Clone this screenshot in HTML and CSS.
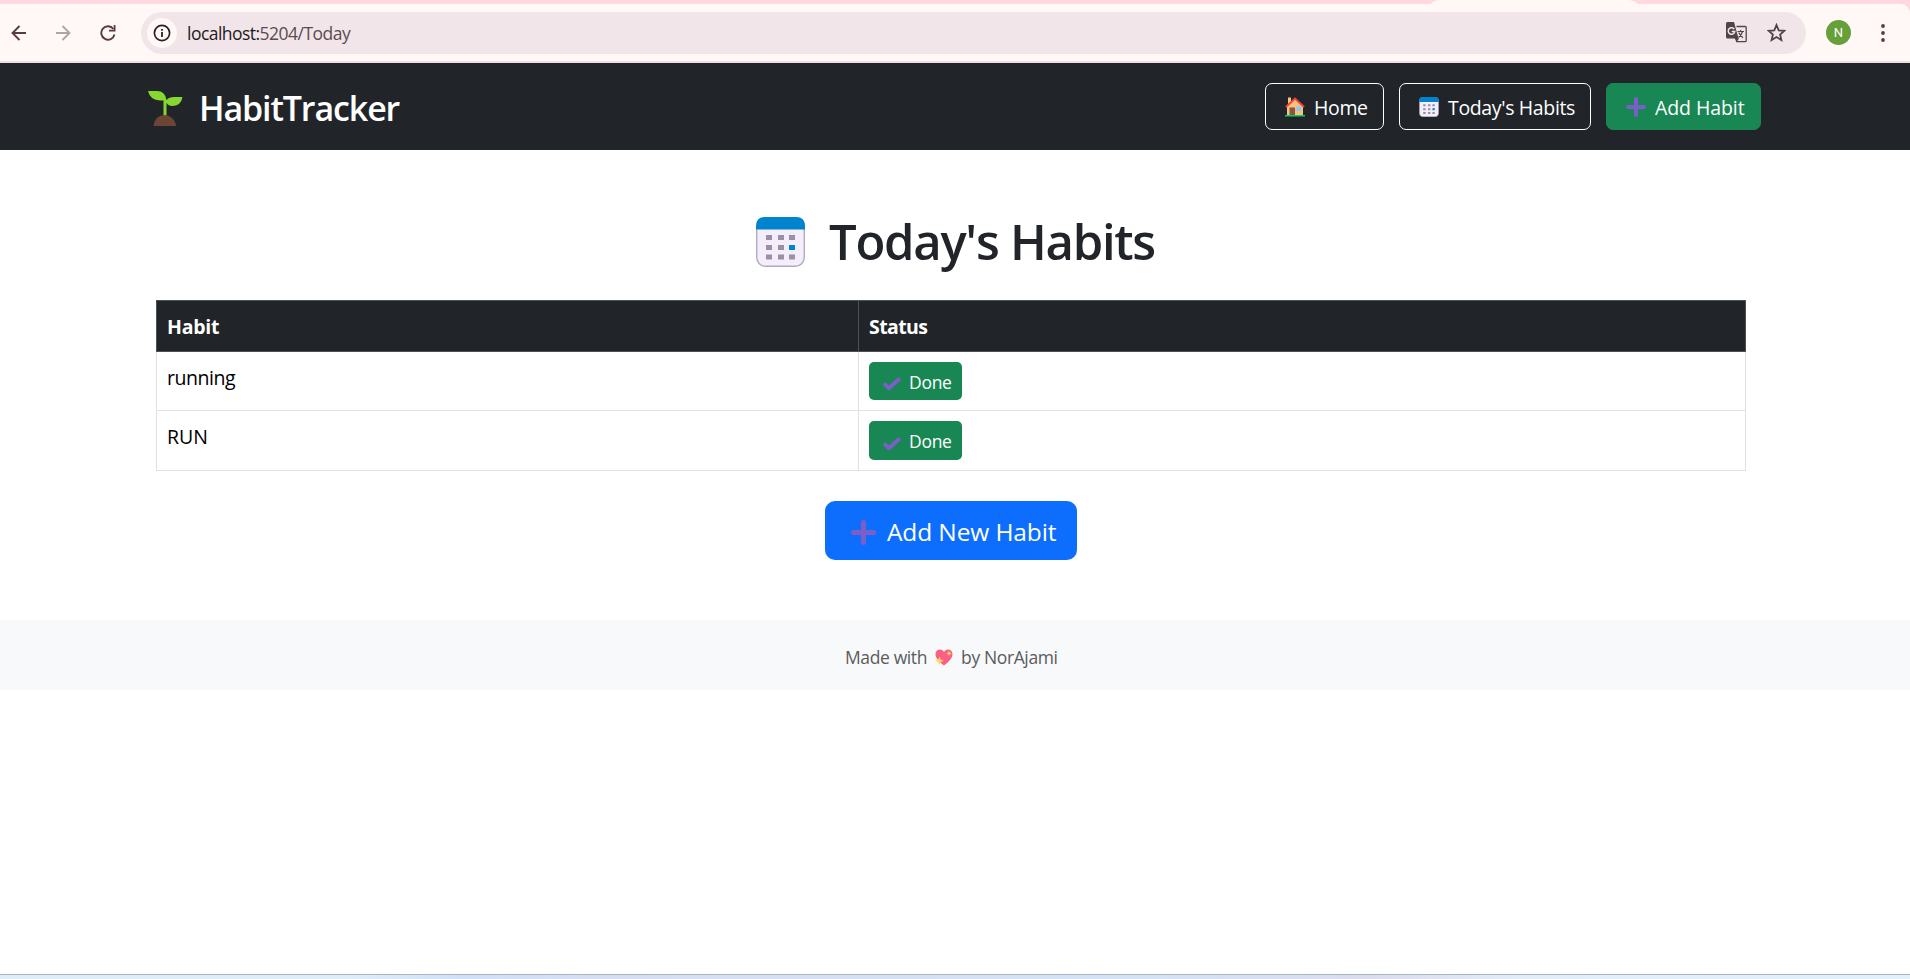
FILE: index.html
```html
<!DOCTYPE html>
<html lang="en">
<head>
<meta charset="utf-8">
<title>Today's Habits</title>
<link rel="stylesheet" href="styles.css">
</head>
<body>
<svg class="defs" width="0" height="0" aria-hidden="true">
  <symbol id="calendar" viewBox="0 0 49 50">
    <rect x=".7" y=".7" width="47.6" height="48.6" rx="9" fill="#f4edfa" stroke="#b4a9c2" stroke-width="1.4"/>
    <path d="M0 12.500V9Q0 0 9 0H40Q49 0 49 9V12.500Z" fill="#0084ce"/>
    <path d="M10 18h6v5h-6zM22 18h6v5h-6zM33 18h6v5h-6zM10 28h6v5h-6zM22 28h6v5h-6zM10 37.500h6v5h-6zM22 37.500h6v5h-6zM33 37.500h6v5h-6z" fill="#9b8fa8"/>
    <path d="M33 28h6v5h-6z" fill="#0084ce"/>
  </symbol>
  <symbol id="plus" viewBox="0 0 20 20">
    <path d="M10 2v16M2 10h16" stroke="#7c5ec8" stroke-width="4" stroke-linecap="round"/>
  </symbol>
  <symbol id="check" viewBox="0 0 18 14">
    <path d="M2.300 7.600L6 11.200L15.600 2.600" fill="none" stroke="#7c5ec8" stroke-width="4" stroke-linecap="round" stroke-linejoin="round"/>
  </symbol>
</svg>

<header class="browser">
  <div class="tabstrip"><div class="active-tab"></div></div>
  <div class="toolbar">
    <svg class="back" width="16" height="16" viewBox="0 0 16 16"><path d="M15 8H2M8.500 1L1.500 8l7 7" fill="none" stroke="#5b3b42" stroke-width="1.900"/></svg>
    <svg class="forward" width="16" height="16" viewBox="0 0 16 16"><path d="M1 8h13M7.500 1l7 7l-7 7" fill="none" stroke="#b5a2a6" stroke-width="1.900"/></svg>
    <svg class="reload" width="16" height="16" viewBox="0 0 16 16"><path d="M13.400 4A6.700 6.700 0 1 0 14.500 9.500" fill="none" stroke="#5b3b42" stroke-width="1.900"/><path d="M15.500 0v6.500H9V4.700h4.700V0z" fill="#5b3b42"/></svg>
    <div class="omnibox">
      <span class="site-info"><svg width="18" height="18" viewBox="0 0 18 18"><circle cx="9" cy="9" r="7.600" fill="none" stroke="#2b2023" stroke-width="1.700"/><path d="M8.100 8h1.800v5H8.100zM8.100 5h1.800v1.800H8.100z" fill="#2b2023"/></svg></span>
      <span class="url"><span class="host">localhost:</span>5204/Today</span>
      <svg class="translate" width="21" height="21" viewBox="0 0 21 21"><path d="M10.500 4.500H19.200Q20.200 4.500 20.200 5.500V18.700Q20.200 19.700 19.200 19.700H10.500" fill="none" stroke="#52434a" stroke-width="1.300"/><path d="M1.500 0H8L12.500 16.500H1.500Q0 16.500 0 15V1.500Q0 0 1.500 0ZM8.800 16.500H13L10.500 20.600Z" fill="#52434a"/><path d="M8.300 7.200A3.300 3.300 0 1 0 8.800 9.500H5.700" fill="none" stroke="#f2e5e9" stroke-width="1.500"/><path d="M11.500 9.500h6.500M14.700 8v1.500M16.500 9.500Q15.500 13 12.500 15.500M12.700 10.500Q14.500 14 17 15.800" fill="none" stroke="#52434a" stroke-width="1.200"/></svg>
      <svg class="star" width="19" height="19" viewBox="0 0 19 19"><path d="M9.500 2l2.200 5.300 5.700.5-4.300 3.700 1.300 5.600-4.900-3-4.900 3 1.300-5.600L1.600 7.800l5.700-.5z" fill="none" stroke="#52434a" stroke-width="1.800"/></svg>
    </div>
    <span class="avatar">N</span>
    <svg class="menu" width="4" height="18" viewBox="0 0 4 18"><g fill="#5b3b42"><circle cx="2" cy="2" r="1.900"/><circle cx="2" cy="9" r="1.900"/><circle cx="2" cy="16" r="1.900"/></g></svg>
  </div>
</header>

<nav class="navbar">
  <a class="brand">
    <svg width="35" height="35" viewBox="0 0 35 35"><path d="M17 25V12" stroke="#86d72f" stroke-width="3" fill="none"/><path d="M0 0H9Q17 0 18.500 9Q21 6 26 6H34.500Q33 15 24 15Q20.500 15 18.500 12V12H15.500V9.500H12Q2 9 0 0Z" fill="#86d72f"/><path d="M5.500 35Q5.500 31 8.500 27.500Q12 24 16.500 24T24.500 27.500Q28 31 28 35Z" fill="#6d4534"/></svg>
    <span class="brand-name">HabitTracker</span>
  </a>
  <div class="links">
    <a class="btn home"><svg width="20" height="20" viewBox="0 0 20 20"><path d="M3 .5h3v7H3z" fill="#f8c27c"/><path d="M2 9L10 2L18 9V18.500H2Z" fill="#f8c27c"/><path d="M.9 9.900L10 1.500L19.100 9.900" fill="none" stroke="#f4413c" stroke-width="2"/><path d="M4.500 10.500h5.500v8H4.500z" fill="#8b5742"/><rect x="11.500" y="9.500" width="4.500" height="4.500" fill="#83cbff"/><path d="M0 18h20v1.500H0z" fill="#00d26a"/></svg><span>Home</span></a>
    <a class="btn today"><svg width="20" height="20"><use href="#calendar"/></svg><span>Today's Habits</span></a>
    <a class="btn add"><svg width="20" height="20"><use href="#plus"/></svg><span>Add Habit</span></a>
  </div>
</nav>

<main>
  <h1><svg width="49" height="50"><use href="#calendar"/></svg><span>Today's Habits</span></h1>
  <table>
    <thead><tr><th class="habit-col"><span class="t-habit">Habit</span></th><th><span class="t-status">Status</span></th></tr></thead>
    <tbody>
      <tr class="row-one"><td class="name"><span class="t-running">running</span></td><td><a class="done"><svg width="18" height="14"><use href="#check"/></svg><span>Done</span></a></td></tr>
      <tr class="row-two"><td class="name"><span class="t-run">RUN</span></td><td><a class="done tall"><svg width="18" height="14"><use href="#check"/></svg><span>Done</span></a></td></tr>
    </tbody>
  </table>
  <a class="add-new"><svg width="25" height="25"><use href="#plus"/></svg><span>Add New Habit</span></a>
</main>

<footer><span class="made">Made with</span><svg width="18" height="17" viewBox="0 0 18 17"><path d="M9 16.500C4 12.500 .5 9 .5 5.200C.5 2.500 2.500 .6 5 .6C6.800 .6 8.200 1.500 9 3C9.800 1.500 11.200 .6 13 .6C15.500 .6 17.500 2.500 17.500 5.200C17.500 9 14 12.500 9 16.500Z" fill="#fb5f83"/><path d="M4.500 7.500l1.300 3L8.800 11.800L5.800 13.100L4.500 16.100L3.200 13.100L.2 11.800L3.200 10.500ZM14 2l.9 1.600 1.600.9-1.600.9L14 7l-.9-1.600-1.600-.9 1.600-.9Z" fill="#fcd667"/></svg><span class="by">by NorAjami</span></footer>
<div class="taskbar"></div>
</body>
</html>
```
FILE: styles.css
```css
* { box-sizing: border-box; }
body {
  margin: 0;
  height: 979px;
  overflow: hidden;
  display: flex;
  flex-direction: column;
  background: #fff;
  color: #212529;
  font-family: "Open Sans", "Noto Sans", sans-serif;
  font-size: 19.5px;
  line-height: 30px;
}
svg { display: block; flex: none; }
.defs { position: absolute; }
span { white-space: nowrap; }

/* Browser chrome */
.browser { height: 63px; background: #ffd8e0; border-bottom: 2px solid #f2dde2; }
.tabstrip { height: 4px; }
.active-tab { width: 206px; height: 4px; margin-left: 1431px; background: #fff8f6; border-radius: 10px 10px 0 0 / 4px 4px 0 0; }
.toolbar { height: 57px; display: flex; align-items: center; background: #fff8f6; border-radius: 0 9px 0 0; }
.back { margin-left: 11px; }
.forward { margin-left: 28px; }
.reload { margin-left: 29px; }
.omnibox { width: 1665px; height: 42px; margin-left: 25px; padding-left: 6px; display: flex; align-items: center; background: #f2e5e9; border-radius: 21px; }
.site-info { width: 30px; height: 30px; border-radius: 50%; display: flex; align-items: center; justify-content: center; background: #fff8f6; }
.url { margin-left: 10px; padding-top: 1px; color: #5b4b50; font-size: 17.5px; letter-spacing: -.53px; }
.host { color: #211a1d; }
.translate { margin-left: auto; margin-right: 20px; }
.star { margin-right: 20px; }
.avatar { width: 25px; height: 25px; margin-left: 20px; border-radius: 50%; background: #679f38; color: #fff; font: 13px/25px Roboto, sans-serif; text-align: center; }
.menu { margin-left: 30px; }

/* Site navigation */
.navbar { height: 87px; padding: 0 149px 0 148px; display: flex; align-items: center; justify-content: space-between; background: #212529; color: #fff; }
.brand { display: flex; align-items: center; gap: 16px; padding-top: 2px; }
.brand svg { margin-top: 2px; }
.brand-name { font-size: 34px; font-weight: 600; letter-spacing: -1.12px; }
.links { display: flex; gap: 15px; }
.btn { height: 47px; display: flex; align-items: center; gap: 9px; padding-left: 19px; border: 1px solid #fff; border-radius: 7px; }
.home { width: 119px; }
.today { width: 192px; }
.add { width: 155px; background: #198754; border-color: #198754; }
.btn span { padding-top: 2px; letter-spacing: -.35px; }
.btn.add span { letter-spacing: -.08px; }

/* Habit list */
main { height: 470px; padding: 67px 0 0 156px; }
h1 { width: 1590px; height: 50px; margin: 0 0 33px; padding-left: 600px; display: flex; align-items: center; gap: 24px; font-size: 49px; font-weight: 600; line-height: 50px; letter-spacing: -1.28px; }
h1 span { padding-bottom: 2px; }
table { width: 1590px; table-layout: fixed; border-collapse: collapse; color: #000; }
th, td { padding: 10px; border: 1px solid #dee2e6; text-align: left; vertical-align: top; }
th { height: 51px; padding: 11px 10px 9px; background: #212529; color: #fff; border-color: #4d5154; font-weight: 700; }
.name { padding-top: 11px; }
.habit-col { width: 702px; }
.t-habit { letter-spacing: -.25px; }
.t-status { letter-spacing: -.6px; }
.t-running { letter-spacing: -.45px; }
.row-one { height: 59px; }
.row-two { height: 60px; }
.done { width: 93px; height: 38px; display: flex; align-items: center; gap: 9px; padding-left: 14px; border-radius: 5px; background: #198754; color: #fff; font-size: 17.5px; letter-spacing: -.3px; }
.done svg { margin-top: 6px; }
.done span { margin-left: -1px; padding-top: 1px; }
.tall { height: 39px; }
.add-new { width: 252px; height: 59px; margin: 30px 0 0 669px; display: flex; align-items: center; gap: 11px; padding-left: 26px; border-radius: 10px; background: #0d6efd; color: #fff; font-size: 24.500px; letter-spacing: -.12px; }
.add-new svg { margin-top: 3px; }
.add-new span { padding-top: 2px; }

footer { height: 70px; display: flex; align-items: center; padding-left: 845px; background: #f8f9fa; color: #595c5f; font-size: 17.5px; }
footer span { padding-top: 3px; letter-spacing: -.38px; }
footer svg { margin: 4px 8px 0 8px; }
.taskbar { height: 5px; margin-top: auto; border-top: 1px solid #a9b6bf; background: linear-gradient(90deg, #dfedf8 0 18%, #d1e0f7 24%, #d7def3 32%, #d5e2f6 60%, #dcdcee 72%, #e2edf8 80%, #e1f0fb); }
```
